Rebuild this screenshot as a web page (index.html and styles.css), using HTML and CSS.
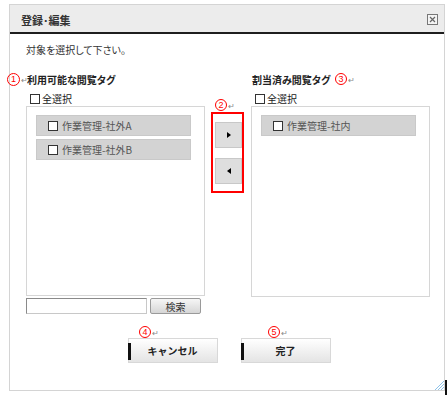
FILE: index.html
```html
<!DOCTYPE html>
<html>
	<head>
		<meta charset="UTF-8">
		<title>登録･編集</title>
		<link rel="stylesheet" href="styles.css">
	</head>
	<body>
		<div class="page">
			<div class="dialog">
				<div class="head">
					<span class="title">登録･編集</span>
					<svg class="close" width="11" height="11" viewBox="0 0 11 11">
						<rect x="0.5" y="0.5" width="10" height="10" fill="#f4f4f4" stroke="#777"/>
						<path d="M3 3L8 8M8 3L3 8" stroke="#666" stroke-width="1.2"/>
					</svg>
				</div>
				<div class="body">
					<p class="lead">対象を選択して下さい。</p>
					<div class="cols">
						<div class="col">
							<div class="label">利用可能な閲覧タグ</div>
							<div class="all"><span class="cb"></span>全選択</div>
							<div class="list">
								<div class="item"><span class="cb"></span>作業管理-社外A</div>
								<div class="item"><span class="cb"></span>作業管理-社外B</div>
							</div>
							<div class="search">
								<input type="text" value="">
								<button>検索</button>
							</div>
						</div>
						<div class="mid">
							<div class="arrows">
								<button class="arw"><span class="tri-r"></span></button>
								<button class="arw"><span class="tri-l"></span></button>
							</div>
						</div>
						<div class="col">
							<div class="label">割当済み閲覧タグ</div>
							<div class="all"><span class="cb"></span>全選択</div>
							<div class="list tall">
								<div class="item"><span class="cb"></span>作業管理-社内</div>
							</div>
						</div>
					</div>
				</div>
				<div class="actions">
					<button class="btn">キャンセル</button>
					<button class="btn">完了</button>
				</div>
				<svg class="grip" width="9" height="10" viewBox="0 0 9 10">
					<path d="M0 10L9 1M3 10L9 4M6 10L9 7" stroke="#8ec3ea" stroke-width="1"/>
				</svg>
			</div>
			<span class="edge"></span>

			<!-- 注記マーク -->
			<span class="mark m1"><i>1</i><b>↵</b></span>
			<span class="mark m2"><i>2</i><b>↵</b></span>
			<span class="mark m3"><i>3</i><b>↵</b></span>
			<span class="mark m4"><i>4</i><b>↵</b></span>
			<span class="mark m5"><i>5</i><b>↵</b></span>
		</div>
	</body>
</html>
```
FILE: styles.css
```css
*{
	box-sizing: border-box;
}
body{
	margin: 0;
	background: #fff;
	font-family: "Noto Sans CJK JP", "Liberation Sans", sans-serif;
	font-size: 10px;
	font-feature-settings: "palt";
	color: #222;
}
.page{
	position: relative;
	width: 447px;
	height: 401px;
	padding: 4px 0 0 9px;
}
.dialog{
	position: relative;
	width: 436px;
	height: 387px;
	border: 1px solid #d4d4d4;
	display: flex;
	flex-direction: column;
}
.head{
	height: 29px;
	background: #ececec;
	border-bottom: 2px solid #1e1e1e;
	display: flex;
	align-items: center;
	justify-content: space-between;
	padding: 2px 6px 0 11px;
}
.title{
	font-size: 11px;
	font-weight: bold;
	color: #333;
}
.body{
	padding: 9px 0 0 16px;
}
.lead{
	margin: 0;
	line-height: 14px;
	color: #333;
}
.cols{
	display: grid;
	grid-template-columns: 179px 46px 179px;
	margin-top: 16px;
}
.label{
	font-weight: bold;
	line-height: 14px;
	margin-bottom: 5px;
	padding-left: 1px;
}
.all{
	display: flex;
	align-items: center;
	gap: 2px;
	line-height: 14px;
	padding-left: 4px;
}
.cb{
	display: inline-block;
	width: 10px;
	height: 10px;
	border: 1px solid #333;
	background: #fff;
}
.list{
	height: 190px;
	border: 1px solid #d6d6d6;
	padding: 8px 13px 0 9px;
	display: flex;
	flex-direction: column;
	gap: 3px;
}
.list.tall{
	height: 191px;
}
.item{
	height: 21px;
	background: #d3d3d3;
	border: 1px solid #c9c9c9;
	display: flex;
	align-items: center;
	gap: 4px;
	padding-left: 11px;
	color: #555;
}
.search{
	display: flex;
	gap: 3px;
	margin-top: 2px;
}
.search input{
	width: 121px;
	height: 16px;
	margin: 0;
	border: 1px solid;
	border-color: #8a8a8a #c8c8c8 #c8c8c8 #8a8a8a;
}
.search button{
	width: 51px;
	height: 16px;
	padding: 0;
	font-family: inherit;
	font-size: 10px;
	color: #333;
	background: linear-gradient(#f6f6f6, #d6d6d6);
	border: 1px solid #9a9a9a;
	border-radius: 2px;
}
.mid{
	padding: 39px 0 0 6px;
}
.arrows{
	width: 33px;
	height: 81px;
	border: 2px solid #f00;
	padding: 8px 0 0 2px;
	display: flex;
	flex-direction: column;
	gap: 10px;
}
.arw{
	width: 27px;
	height: 26px;
	padding: 0;
	background: #dedede;
	border: 1px solid #c8c8c8;
	display: flex;
	align-items: center;
	justify-content: center;
}
.tri-r{
	border-left: 4px solid #000;
	border-top: 3px solid transparent;
	border-bottom: 3px solid transparent;
}
.tri-l{
	border-right: 4px solid #000;
	border-top: 3px solid transparent;
	border-bottom: 3px solid transparent;
}
.actions{
	display: flex;
	justify-content: center;
	gap: 23px;
	padding-left: 4px;
	margin-top: 24px;
}
.btn{
	position: relative;
	width: 90px;
	height: 25px;
	padding: 0;
	font-family: inherit;
	font-size: 10px;
	font-weight: bold;
	color: #222;
	background: linear-gradient(#ffffff, #e4e4e4);
	border: 1px solid #d8d8d8;
}
.btn::before{
	content: "";
	position: absolute;
	left: -1px;
	top: 4px;
	width: 3px;
	height: 17px;
	background: #111;
}
.grip{
	position: absolute;
	right: 0;
	bottom: 0;
}
.edge{
	position: absolute;
	left: 445px;
	top: 380px;
	width: 2px;
	height: 15px;
	background: #111;
}
.mark{
	position: absolute;
	display: flex;
	align-items: center;
	gap: 1px;
}
.mark i{
	width: 12px;
	height: 12px;
	border: 1px solid #f00;
	border-radius: 50%;
	color: #f00;
	font-style: normal;
	font-size: 9px;
	line-height: 10px;
	text-align: center;
	font-family: "Liberation Sans", sans-serif;
}
.mark b{
	font-weight: normal;
	font-size: 8px;
	color: #888;
}
.m1{ left: 7px; top: 73px; }
.m1 i{ width: 13px; height: 13px; line-height: 11px; }
.m2{ left: 215px; top: 99px; }
.m3{ left: 335px; top: 73px; }
.m4{ left: 139px; top: 326px; }
.m5{ left: 268px; top: 326px; }
```
